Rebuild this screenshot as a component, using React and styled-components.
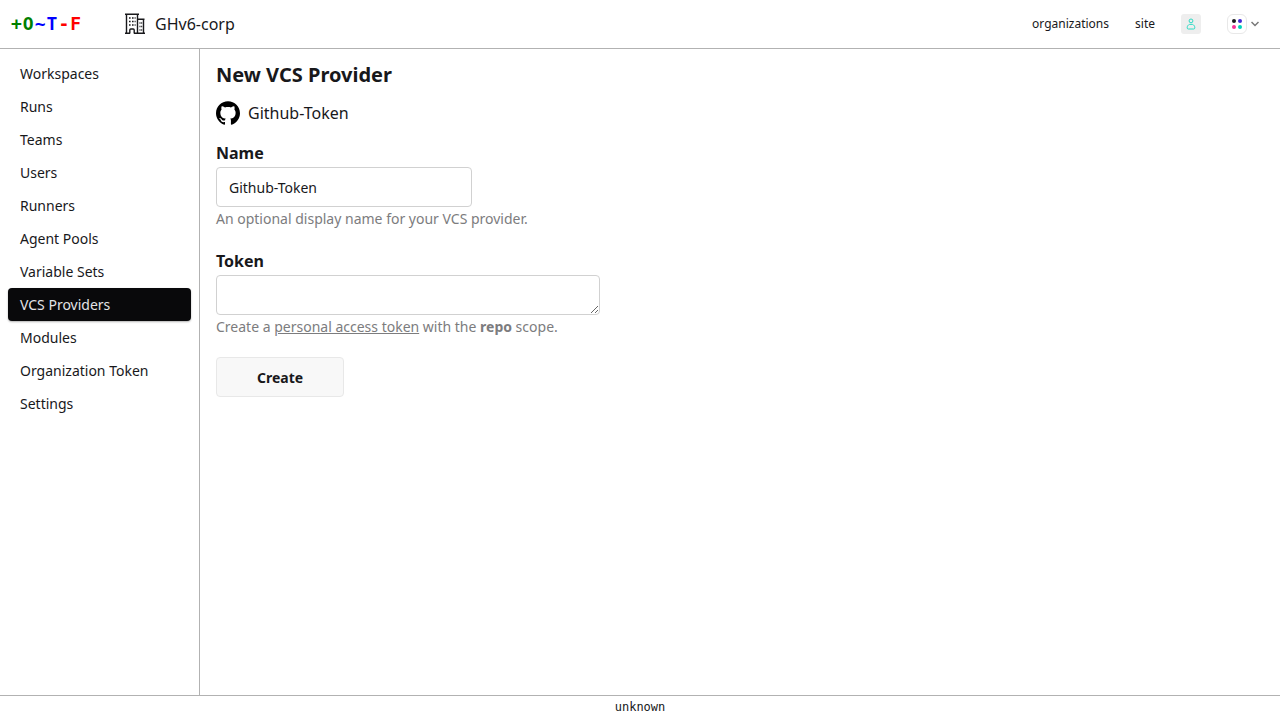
import React from "react";
import styled, { createGlobalStyle } from "styled-components";
import { SiGithub } from "react-icons/si";

const GlobalStyle = createGlobalStyle`
  *, *::before, *::after { box-sizing: border-box; }
  body {
    margin: 0;
    background: #fff;
    color: #18181b;
    font-family: "Noto Sans", sans-serif;
    font-size: 16px;
    line-height: 24px;
  }
  h1, p, ul { margin: 0; padding: 0; }
  a { color: inherit; text-decoration: none; }
`;

const Page = styled.div`
  display: flex;
  flex-direction: column;
  min-height: 100vh;
`;

const Header = styled.header`
  display: flex;
  align-items: center;
  justify-content: space-between;
  height: 49px;
  padding: 0 21px 0 11px;
  border-bottom: 1px solid #b2b2b2;
`;

const Brand = styled.div`
  display: flex;
  align-items: center;
  gap: 42px;
`;

const Logo = styled.a`
  font: bold 18px/24px "DejaVu Sans Mono", monospace;
  letter-spacing: 1px;
`;

const Tint = styled.span`
  color: ${(p) => p.$color};
`;

const Organization = styled.a`
  display: flex;
  align-items: center;
  gap: 9px;
`;

const TopNav = styled.nav`
  display: flex;
  align-items: center;
  gap: 26px;
  font-size: 12px;
  line-height: 16px;
`;

const UserLink = styled.a`
  display: flex;
  align-items: center;
  justify-content: center;
  width: 20px;
  height: 20px;
  border-radius: 3px;
  background: #eee;
`;

const ThemeButton = styled.button`
  display: flex;
  align-items: center;
  gap: 4px;
  padding: 0;
  border: 0;
  background: none;
`;

const Swatches = styled.span`
  display: grid;
  grid-template-columns: 4px 4px;
  gap: 2px;
  padding: 4px;
  border: 1px solid #e8e8e8;
  border-radius: 6px;
`;

const Dot = styled.span`
  height: 4px;
  border-radius: 50%;
  background: ${(p) => p.$color};
`;

const Body = styled.div`
  display: flex;
  flex: 1;
`;

const Sidebar = styled.nav`
  flex: 0 0 200px;
  padding: 8px;
  border-right: 1px solid #b2b2b2;
`;

const Menu = styled.ul`
  list-style: none;
`;

const MenuLink = styled.a`
  display: block;
  padding: 6px 12px;
  border-radius: 4px;
  font-size: 14px;
  line-height: 21px;
  ${(p) =>
    p.$active &&
    `
    background: #09090b;
    color: #e4e4e7;
    box-shadow: 0 1px 2px rgba(0, 0, 0, 0.3);
  `}
`;

const Main = styled.main`
  flex: 1;
  min-width: 0;
  padding: 12px 16px;
`;

const Title = styled.h1`
  font-size: 20px;
  line-height: 28px;
`;

const Provider = styled.div`
  display: flex;
  align-items: center;
  gap: 8px;
  margin-top: 12px;
`;

const Form = styled.form`
  display: flex;
  flex-direction: column;
  align-items: flex-start;
  gap: 20px;
  margin-top: 16px;
`;

const Field = styled.div`
  display: flex;
  flex-direction: column;
  align-items: flex-start;
  width: 100%;
`;

const Label = styled.label`
  margin-bottom: 2px;
  font-weight: 700;
`;

const TextInput = styled.input`
  width: 256px;
  max-width: 100%;
  height: 40px;
  padding: 0 12px;
  border: 1px solid #d1d1d1;
  border-radius: 4px;
  background: #fff;
  color: inherit;
  font: 14px/20px "Noto Sans", sans-serif;
`;

const TextArea = styled.textarea`
  display: block;
  width: 384px;
  max-width: 100%;
  height: 40px;
  min-height: 40px;
  padding: 8px 12px;
  border: 1px solid #d1d1d1;
  border-radius: 4px;
  background: #fff;
  color: inherit;
  font: 14px/20px "Noto Sans", sans-serif;
`;

const Hint = styled.p`
  margin-top: 2px;
  color: #7c7c7e;
  font-size: 14px;
  line-height: 20px;

  a { text-decoration: underline; }
`;

const CreateButton = styled.button`
  width: 128px;
  height: 40px;
  border: 1px solid #e8e8e8;
  border-radius: 4px;
  background: #f8f8f8;
  color: inherit;
  font: bold 14px/21px "Noto Sans", sans-serif;
`;

const Footer = styled.footer`
  padding: 3px 0 5px;
  border-top: 1px solid #b2b2b2;
  font: 12px/16px "DejaVu Sans Mono", monospace;
  text-align: center;
`;

const BuildingIcon = () => (
  <svg width="22" height="22" viewBox="0 0 22 22" fill="none" stroke="#18181b" strokeWidth="1.4">
    <path d="M1 1.2h14M2.5 1v19M13.5 1v19M13.5 6.2h7M19.5 6v14M1 20.2h5M10 20.2h11M5.8 20.5V17q0-1 1-1h2.4q1 0 1 1v3.5" />
    <path d="M5 5h1.6M8 5h1.6M10.6 5h1M5 8.5h1.6M8 8.5h1.6M10.6 8.5h1M5 12h1.6M8 12h1.6M10.6 12h1M15.5 10h1M17.2 10h1M15.5 13.5h1M17.2 13.5h1M15.5 17h1M17.2 17h1" />
  </svg>
);

const UserIcon = () => (
  <svg width="10" height="12" viewBox="0 0 10 12" fill="none" stroke="#2ddbc4" strokeWidth="1">
    <circle cx="5" cy="2.9" r="1.9" />
    <path d="M3.6 6.4h2.8C8 6.8 8.8 8.2 8.8 9.8q0 1.2-1.1 1.2H2.3Q1.2 11 1.2 9.8C1.2 8.2 2 6.8 3.6 6.4Z" />
  </svg>
);

const ChevronIcon = () => (
  <svg width="8" height="6" viewBox="0 0 8 6" fill="none" stroke="#777" strokeWidth="1.5">
    <path d="M.5 1 4 4.5 7.5 1" />
  </svg>
);

const links = [
  "Workspaces",
  "Runs",
  "Teams",
  "Users",
  "Runners",
  "Agent Pools",
  "Variable Sets",
  "VCS Providers",
  "Modules",
  "Organization Token",
  "Settings",
];

export default function App() {
  return (
    <Page>
      <GlobalStyle />
      <Header>
        <Brand>
          <Logo href="#">
            <Tint $color="#008000">+O</Tint>
            <Tint $color="#0000ff">~T</Tint>
            <Tint $color="#ff0000">-F</Tint>
          </Logo>
          <Organization href="#">
            <BuildingIcon />
            GHv6-corp
          </Organization>
        </Brand>
        <TopNav>
          <a href="#">organizations</a>
          <a href="#">site</a>
          <UserLink href="#" aria-label="Profile">
            <UserIcon />
          </UserLink>
          <ThemeButton type="button" aria-label="Theme">
            <Swatches>
              <Dot $color="#1c1c1f" />
              <Dot $color="#422ad5" />
              <Dot $color="#f43098" />
              <Dot $color="#00d3bb" />
            </Swatches>
            <ChevronIcon />
          </ThemeButton>
        </TopNav>
      </Header>
      <Body>
        <Sidebar>
          <Menu>
            {links.map((name) => (
              <li key={name}>
                <MenuLink href="#" $active={name === "VCS Providers"}>
                  {name}
                </MenuLink>
              </li>
            ))}
          </Menu>
        </Sidebar>
        <Main>
          <Title>New VCS Provider</Title>
          <Provider>
            <SiGithub size={24} color="#000" />
            Github-Token
          </Provider>
          <Form>
            <Field>
              <Label htmlFor="name">Name</Label>
              <TextInput id="name" type="text" defaultValue="Github-Token" />
              <Hint>An optional display name for your VCS provider.</Hint>
            </Field>
            <Field>
              <Label htmlFor="token">Token</Label>
              <TextArea id="token" />
              <Hint>
                Create a <a href="#">personal access token</a> with the <b>repo</b> scope.
              </Hint>
            </Field>
            <CreateButton type="button">Create</CreateButton>
          </Form>
        </Main>
      </Body>
      <Footer>unknown</Footer>
    </Page>
  );
}
